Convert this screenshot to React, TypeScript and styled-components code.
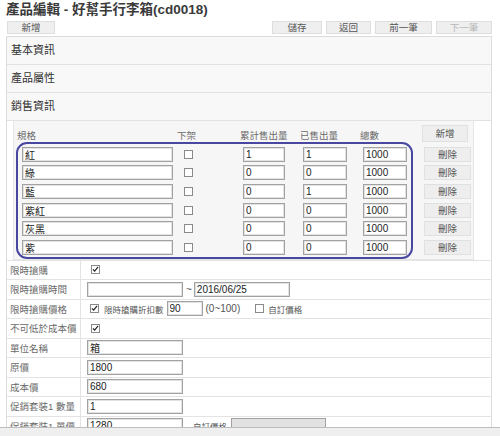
import React from "react";
import styled, { createGlobalStyle } from "styled-components";

const FONT = `"Liberation Sans", "Noto Sans CJK TC", sans-serif`;

const GlobalStyle = createGlobalStyle`
  html, body { margin: 0; padding: 0; background: #fff; overflow: hidden; }
  body { font-family: ${FONT}; color: #333; width: 500px; height: 436px; }
  * { box-sizing: border-box; }
`;

const Page = styled.div`
  padding-left: 6px;
  width: 500px;
`;

const Title = styled.h1`
  margin: 0;
  height: 20px;
  line-height: 20px;
  font-size: 13.5px;
  font-weight: 700;
  color: #3a3a3a;
  white-space: nowrap;
`;

const Toolbar = styled.div`
  display: flex;
  justify-content: space-between;
  align-items: flex-start;
  height: 16px;
  padding-top: 1px;
  width: 486px;
`;

const ToolGroup = styled.div`
  display: flex;
  gap: 4px;
`;

const ToolButton = styled.button<{ $w: number; $off?: boolean; $ml?: number }>`
  width: ${(p) => p.$w}px;
  height: 13px;
  margin: 0 0 0 ${(p) => p.$ml ?? 0}px;
  padding: 0;
  border: 1px solid #dedede;
  background: #efefef;
  color: ${(p) => (p.$off ? "#b8b8b8" : "#555")};
  font: 9.5px/11px ${FONT};
`;

const Panel = styled.div`
  width: 486px;
  border: 1px solid #dcdcdc;
  border-bottom: none;
`;

const SectionHeader = styled.div`
  height: 28px;
  border-bottom: 1px solid #e2e2e2;
  background: #f8f8f8;
  padding-left: 4px;
  font-size: 11px;
  line-height: 27px;
  color: #333;
`;

const SalesBody = styled.div`
  padding-left: 6px;
`;

const InnerPanel = styled.div`
  position: relative;
  width: 461px;
  background: #f6f6f6;
  border: 1px solid #e6e6e6;
  border-top: none;
  padding-bottom: 2px;
`;

const COLS = "163px 63px 60px 60px 61px 52px";

const HeadRow = styled.div`
  display: grid;
  grid-template-columns: ${COLS};
  height: 24px;
  align-items: start;
`;

const HeadCell = styled.div<{ $pl?: number }>`
  padding-top: 9px;
  padding-left: ${(p) => p.$pl ?? 0}px;
  font-size: 9.5px;
  line-height: 12px;
  color: #6a6a6a;
  white-space: nowrap;
`;

const DataRow = styled.div`
  display: grid;
  grid-template-columns: ${COLS};
  height: 18.6px;
  align-items: center;
`;

const Cell = styled.div`
  display: flex;
  align-items: center;
  height: 100%;
`;

const TextInput = styled.input<{ $w: number; $ml?: number; $gray?: boolean }>`
  width: ${(p) => p.$w}px;
  height: 15px;
  margin: 0 0 0 ${(p) => p.$ml ?? 0}px;
  padding: 0 2px;
  border: 1px solid #a2a2a2;
  box-shadow: inset 0 0 0 1px #e2e2e2;
  background: ${(p) => (p.$gray ? "#e2e2e2" : "#fff")};
  font: 10px/13px ${FONT};
  color: #222;
  outline: none;
`;

const SmallButton = styled.button<{ $w: number; $h: number; $ml: number; $mt?: number }>`
  width: ${(p) => p.$w}px;
  height: ${(p) => p.$h}px;
  margin: ${(p) => p.$mt ?? 0}px 0 0 ${(p) => p.$ml}px;
  padding: 0;
  border: 1px solid #e0e0e0;
  background: #eeeeee;
  color: #555;
  font: 9.5px/11px ${FONT};
`;

const Outline = styled.div`
  position: absolute;
  left: 2px;
  top: 20.7px;
  width: 397px;
  height: 117px;
  border: 2px solid #4848a0;
  border-radius: 11px;
  pointer-events: none;
`;

const FormRow = styled.div`
  display: grid;
  grid-template-columns: 74px 1fr;
  height: 19.5px;
  border-top: 1px solid #e3e3e3;
`;

const Label = styled.div`
  display: flex;
  align-items: center;
  padding-left: 3px;
  border-right: 1px solid #e3e3e3;
  font-size: 9.5px;
  color: #6a6a6a;
  white-space: nowrap;
`;

const Value = styled.div`
  display: flex;
  align-items: center;
  padding-left: 6px;
  white-space: nowrap;
`;

const Note = styled.span<{ $size?: number; $ml?: number }>`
  font-size: ${(p) => p.$size ?? 10}px;
  margin-left: ${(p) => p.$ml ?? 0}px;
  color: #555;
`;

const BoxWrap = styled.span<{ $ml?: number }>`
  display: inline-flex;
  align-items: center;
  justify-content: center;
  width: 9px;
  height: 9px;
  margin-left: ${(p) => p.$ml ?? 0}px;
  border: 1px solid #8a8a8a;
  background: #fff;
  flex: none;
`;

const BottomBar = styled.div`
  position: fixed;
  left: 0;
  right: 0;
  bottom: 0;
  height: 9px;
  background: #efefef;
  border-top: 1px solid #bdbdbd;
`;

function Check({ checked, ml }: { checked?: boolean; ml?: number }) {
  return (
    <BoxWrap $ml={ml}>
      {checked && (
        <svg width="9" height="9" viewBox="0 0 9 9">
          <path d="M1.2 4.3 L3.4 6.6 L7.8 1.2" fill="none" stroke="#1a1a1a" strokeWidth="1.4" />
        </svg>
      )}
    </BoxWrap>
  );
}

const rows = [
  { name: "紅", total: "1", sold: "1" },
  { name: "綠", total: "0", sold: "0" },
  { name: "藍", total: "0", sold: "1" },
  { name: "紫紅", total: "0", sold: "0" },
  { name: "灰黑", total: "0", sold: "0" },
  { name: "紫", total: "0", sold: "0" },
];

export default function App() {
  return (
    <>
      <GlobalStyle />
      <Page>
        <Title>產品編輯 - 好幫手行李箱(cd0018)</Title>
        <Toolbar>
          <ToolButton $w={48} $ml={1}>新增</ToolButton>
          <ToolGroup>
            <ToolButton $w={50}>儲存</ToolButton>
            <ToolButton $w={45}>返回</ToolButton>
            <ToolButton $w={57}>前一筆</ToolButton>
            <ToolButton $w={56} $off>下一筆</ToolButton>
          </ToolGroup>
        </Toolbar>
        <Panel>
          <SectionHeader>基本資訊</SectionHeader>
          <SectionHeader>產品屬性</SectionHeader>
          <SectionHeader>銷售資訊</SectionHeader>
          <SalesBody>
            <InnerPanel>
              <HeadRow>
                <HeadCell $pl={3}>規格</HeadCell>
                <HeadCell>下架</HeadCell>
                <HeadCell>累計售出量</HeadCell>
                <HeadCell>已售出量</HeadCell>
                <HeadCell>總數</HeadCell>
                <SmallButton $w={46} $h={17} $ml={1} $mt={4}>新增</SmallButton>
              </HeadRow>
              {rows.map((r) => (
                <DataRow key={r.name}>
                  <Cell>
                    <TextInput $w={151} $ml={8} defaultValue={r.name} readOnly />
                  </Cell>
                  <Cell>
                    <Check ml={7} />
                  </Cell>
                  <Cell>
                    <TextInput $w={42} $ml={3} defaultValue={r.total} readOnly />
                  </Cell>
                  <Cell>
                    <TextInput $w={44} $ml={3} defaultValue={r.sold} readOnly />
                  </Cell>
                  <Cell>
                    <TextInput $w={44} $ml={3} defaultValue="1000" readOnly />
                  </Cell>
                  <Cell>
                    <SmallButton $w={47} $h={15} $ml={3}>刪除</SmallButton>
                  </Cell>
                </DataRow>
              ))}
              <Outline />
            </InnerPanel>
          </SalesBody>
          <FormRow>
            <Label>限時搶購</Label>
            <Value>
              <Check checked ml={4} />
            </Value>
          </FormRow>
          <FormRow>
            <Label>限時搶購時間</Label>
            <Value>
              <TextInput $w={96} defaultValue="" readOnly />
              <Note $ml={3}>~</Note>
              <TextInput $w={96} $ml={2} defaultValue="2016/06/25" readOnly />
            </Value>
          </FormRow>
          <FormRow>
            <Label>限時搶購價格</Label>
            <Value>
              <Check checked ml={3} />
              <Note $size={8.5} $ml={5}>限時搶購折扣數</Note>
              <TextInput $w={36} $ml={3} defaultValue="90" readOnly />
              <Note $ml={3}>(0~100)</Note>
              <Check ml={15} />
              <Note $size={8.5} $ml={4}>自訂價格</Note>
            </Value>
          </FormRow>
          <FormRow>
            <Label>不可低於成本價</Label>
            <Value>
              <Check checked ml={4} />
            </Value>
          </FormRow>
          <FormRow>
            <Label>單位名稱</Label>
            <Value>
              <TextInput $w={96} defaultValue="箱" readOnly />
            </Value>
          </FormRow>
          <FormRow>
            <Label>原價</Label>
            <Value>
              <TextInput $w={96} defaultValue="1800" readOnly />
            </Value>
          </FormRow>
          <FormRow>
            <Label>成本價</Label>
            <Value>
              <TextInput $w={96} defaultValue="680" readOnly />
            </Value>
          </FormRow>
          <FormRow>
            <Label>促銷套裝1 數量</Label>
            <Value>
              <TextInput $w={96} defaultValue="1" readOnly />
            </Value>
          </FormRow>
          <FormRow>
            <Label>促銷套裝1 單價</Label>
            <Value>
              <TextInput $w={96} defaultValue="1280" readOnly />
              <Note $size={8.5} $ml={10}>自訂價格</Note>
              <TextInput $w={95} $ml={4} $gray defaultValue="" readOnly />
            </Value>
          </FormRow>
        </Panel>
      </Page>
      <BottomBar />
    </>
  );
}
